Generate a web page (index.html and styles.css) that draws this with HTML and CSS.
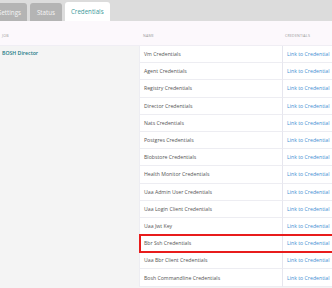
FILE: index.html
```
<!DOCTYPE html>
<html>
<head>
<meta charset="utf-8">
<link rel="stylesheet" href="styles.css">
</head>
<body>
<nav class="tabs">
  <span class="tab settings">Settings</span>
  <span class="tab">Status</span>
  <span class="tab active">Credentials</span>
</nav>
<table class="creds">
  <thead>
    <tr><th class="c-job">Job</th><th class="c-name">Name</th><th class="c-cred">Credentials</th></tr>
  </thead>
  <tbody>
    <tr><td class="job" rowspan="14">BOSH Director</td><td class="name">Vm Credentials</td><td class="cred"><a>Link to Credential</a></td></tr>
    <tr><td class="name">Agent Credentials</td><td class="cred"><a>Link to Credential</a></td></tr>
    <tr><td class="name">Registry Credentials</td><td class="cred"><a>Link to Credential</a></td></tr>
    <tr><td class="name">Director Credentials</td><td class="cred"><a>Link to Credential</a></td></tr>
    <tr><td class="name">Nats Credentials</td><td class="cred"><a>Link to Credential</a></td></tr>
    <tr><td class="name">Postgres Credentials</td><td class="cred"><a>Link to Credential</a></td></tr>
    <tr><td class="name">Blobstore Credentials</td><td class="cred"><a>Link to Credential</a></td></tr>
    <tr><td class="name">Health Monitor Credentials</td><td class="cred"><a>Link to Credential</a></td></tr>
    <tr><td class="name">Uaa Admin User Credentials</td><td class="cred"><a>Link to Credential</a></td></tr>
    <tr><td class="name">Uaa Login Client Credentials</td><td class="cred"><a>Link to Credential</a></td></tr>
    <tr><td class="name">Uaa Jwt Key</td><td class="cred"><a>Link to Credential</a></td></tr>
    <tr class="hl"><td class="name">Bbr Ssh Credentials</td><td class="cred"><a>Link to Credential</a></td></tr>
    <tr><td class="name">Uaa Bbr Client Credentials</td><td class="cred"><a>Link to Credential</a></td></tr>
    <tr><td class="name">Bosh Commandline Credentials</td><td class="cred"><a>Link to Credential</a></td></tr>
  </tbody>
</table>
</body>
</html>
```
FILE: styles.css
```
html, body {
  margin: 0;
  padding: 0;
  background: #f4f4f4;
  font-family: "Open Sans", "Liberation Sans", sans-serif;
  overflow: hidden;
}
.tabs {
  display: flex;
  align-items: flex-end;
  gap: 3px;
  height: 21px;
  background: #dcdcdc;
  margin-left: -12px;
}
.tab {
  display: flex;
  align-items: center;
  height: 18px;
  padding: 0 7px;
  border-radius: 3px 3px 0 0;
  background: #b4b4b4;
  color: #f4f4f4;
  font-size: 6.2px;
}
.tab.settings { padding: 0 6px 0 10px; }
.tab.active {
  background: #fff;
  color: #3a9a9a;
  height: 19px;
  padding: 0 6px;
}
.creds {
  border-collapse: separate;
  border-spacing: 0;
  width: 360px;
  table-layout: fixed;
}
.creds th {
  height: 17px;
  background: #fcf8fc;
  color: #9a9a9a;
  font-size: 3.6px;
  font-weight: 400;
  text-transform: uppercase;
  letter-spacing: 0.2px;
  text-align: left;
  vertical-align: bottom;
  padding: 0 0 7px 0;
  border-bottom: 1px solid #f0eef4;
}
.c-job { width: 137px; padding-left: 2px !important; }
.c-name { width: 139px; padding-left: 4px !important; }
.c-cred { padding-left: 3px !important; }
.creds td {
  height: 16.2px;
  padding: 0;
  font-size: 5.2px;
  vertical-align: middle;
}
.job {
  vertical-align: top !important;
  background: #f4f4f4;
  color: #217a84;
  font-weight: 600;
  padding: 3px 0 0 2px !important;
}
.name {
  background: #fff;
  color: #555;
  padding-left: 4px !important;
  border-bottom: 1px solid #ededf2;
  border-left: 1px solid #ededf2;
}
.cred {
  background: #fff;
  padding-left: 4px !important;
  border-bottom: 1px solid #ededf2;
  border-left: 1px solid #e6e6ee;
}
.cred a {
  color: #3f8fd2;
}
.hl .name { position: relative; }
.hl .name::after {
  content: "";
  position: absolute;
  left: -1px;
  top: -1px;
  width: 240px;
  height: 19px;
  box-sizing: border-box;
  border: 2px solid #e81c1c;
  z-index: 2;
}
```
